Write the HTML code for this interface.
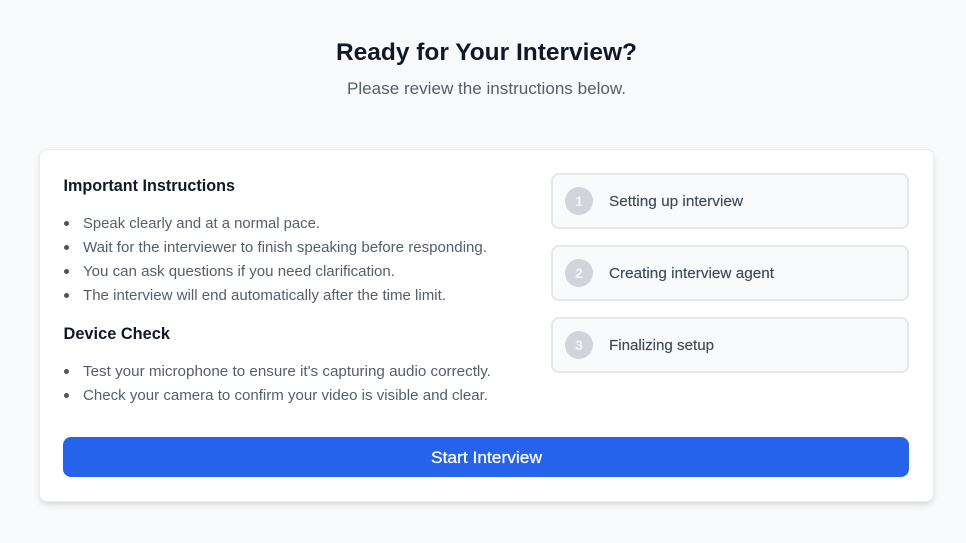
<!DOCTYPE html>
<html lang="en">
<head>
<meta charset="utf-8">
<title>Ready for Your Interview?</title>
<style>
html,body{margin:0;padding:0;width:966px;height:543px;overflow:hidden;background:#f9fafb}
body{position:relative;font-family:"Liberation Sans",sans-serif}
.card{position:absolute;left:39px;top:149px;width:893px;height:351px;background:#fff;border:1px solid #e8edf4;border-radius:8px;box-shadow:0 4px 8px -1px rgba(0,0,0,.1),0 2px 4px -1px rgba(0,0,0,.06)}
.step{position:absolute;left:551px;width:354px;height:52px;background:#f9fafb;border:2px solid #e5e7eb;border-radius:8px}
.num{position:absolute;left:565px;width:28px;height:28px;border-radius:50%;background:#d1d5db}
.btn{position:absolute;left:63px;top:437px;width:846px;height:40px;background:#2563eb;border-radius:8px}
.dot{position:absolute;left:63.5px;width:5px;height:5px;border-radius:50%;background:#4b5563}
svg{position:absolute;left:0;top:0}
text{font-family:"Liberation Sans",sans-serif}
.h1{font-size:24.5px;font-weight:700;fill:#111827}
.sub{font-size:16.5px;fill:#555e6d}
.h2{font-size:16.5px;font-weight:700;fill:#111827}
.li{font-size:14.5px;fill:#555e6d}
.lab{font-size:14.5px;fill:#414a5a;stroke:#414a5a;stroke-width:.15px}
.n{font-size:14px;font-weight:700;fill:#f3f4f6;text-anchor:middle}
.bt{font-size:16.5px;fill:#fff;stroke:#fff;stroke-width:.25px}
</style>
</head>
<body>
<div class="card"></div>
<div class="step" style="top:173px"></div>
<div class="step" style="top:245px"></div>
<div class="step" style="top:317px"></div>
<div class="num" style="top:187px"></div>
<div class="num" style="top:259px"></div>
<div class="num" style="top:331px"></div>
<div class="btn"></div>
<div class="dot" style="top:220.5px"></div>
<div class="dot" style="top:244.5px"></div>
<div class="dot" style="top:268.5px"></div>
<div class="dot" style="top:292.5px"></div>
<div class="dot" style="top:368.5px"></div>
<div class="dot" style="top:392.5px"></div>
<svg width="966" height="543" viewBox="0 0 966 543">
<text class="h1" x="336" y="60" textLength="301" lengthAdjust="spacingAndGlyphs">Ready for Your Interview?</text>
<text class="sub" x="347" y="94" textLength="279" lengthAdjust="spacingAndGlyphs">Please review the instructions below.</text>
<text class="h2" x="63.5" y="191" textLength="171.5" lengthAdjust="spacingAndGlyphs">Important Instructions</text>
<text class="li" x="83" y="228" textLength="237" lengthAdjust="spacingAndGlyphs">Speak clearly and at a normal pace.</text>
<text class="li" x="83" y="252" textLength="404" lengthAdjust="spacingAndGlyphs">Wait for the interviewer to finish speaking before responding.</text>
<text class="li" x="83" y="276" textLength="312" lengthAdjust="spacingAndGlyphs">You can ask questions if you need clarification.</text>
<text class="li" x="83" y="300" textLength="363" lengthAdjust="spacingAndGlyphs">The interview will end automatically after the time limit.</text>
<text class="h2" x="63.5" y="339" textLength="106.5" lengthAdjust="spacingAndGlyphs">Device Check</text>
<text class="li" x="83" y="376" textLength="408" lengthAdjust="spacingAndGlyphs">Test your microphone to ensure it's capturing audio correctly.</text>
<text class="li" x="83" y="400" textLength="405" lengthAdjust="spacingAndGlyphs">Check your camera to confirm your video is visible and clear.</text>
<text class="n" x="579" y="206">1</text>
<text class="n" x="579" y="278">2</text>
<text class="n" x="579" y="350">3</text>
<text class="lab" x="609" y="206" textLength="134" lengthAdjust="spacingAndGlyphs">Setting up interview</text>
<text class="lab" x="609" y="278" textLength="165" lengthAdjust="spacingAndGlyphs">Creating interview agent</text>
<text class="lab" x="609" y="350" textLength="105" lengthAdjust="spacingAndGlyphs">Finalizing setup</text>
<text class="bt" x="431" y="463" textLength="111" lengthAdjust="spacingAndGlyphs">Start Interview</text>
</svg>
</body>
</html>
